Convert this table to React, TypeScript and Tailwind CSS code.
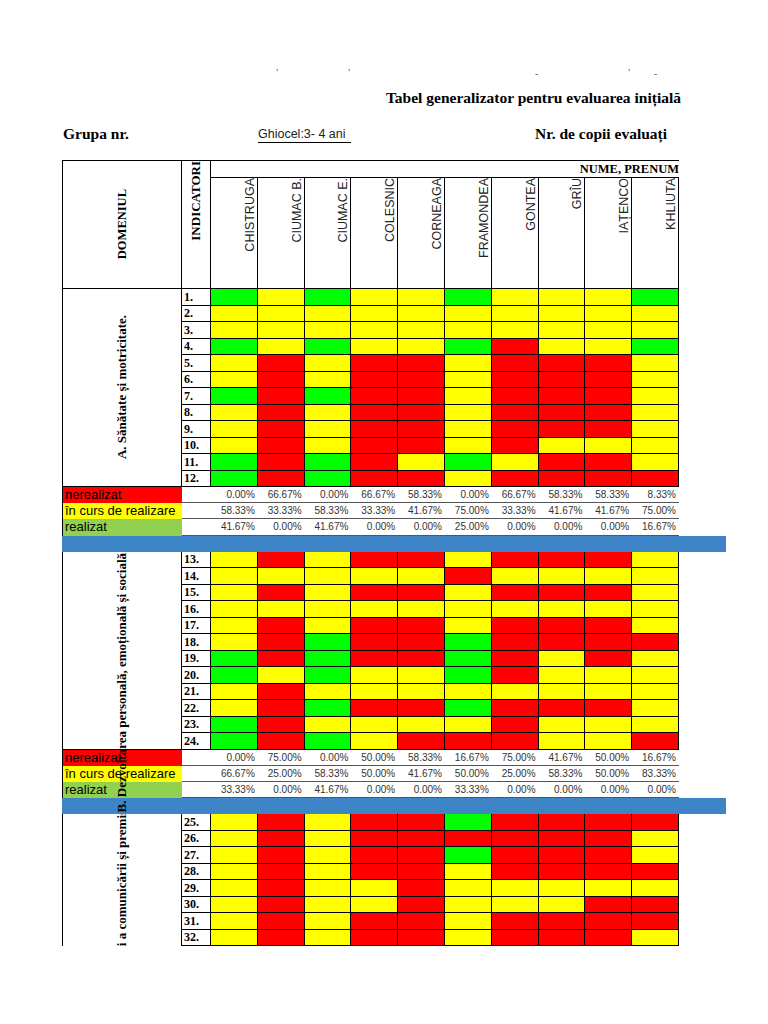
import React from 'react'

const serif = "font-['Liberation_Serif','Times_New_Roman',serif]"
const sans = "font-['Liberation_Sans',Arial,sans-serif]"
const vertical = '[writing-mode:vertical-rl] rotate-180 whitespace-nowrap'

const names = ['CHISTRUGA', 'CIUMAC B.', 'CIUMAC E.', 'COLESNIC', 'CORNEAGA', 'FRAMONDEA', 'GONTEA', 'GRÎU', 'IAȚENCO', 'KHLIUTA']

const fill: Record<string, string> = {
  G: 'bg-[#00ff00]',
  Y: 'bg-[#ffff00]',
  R: 'bg-[#ff0000]',
}

const sectionA = [
  'GYGYYGYYYG',
  'YYYYYYYYYY',
  'YYYYYYYYYY',
  'GYGYYGRYYG',
  'YRYRRYRRRY',
  'YRYRRYRRRY',
  'GRGRRYRRRY',
  'YRYRRYRRRY',
  'YRYRRYRRRY',
  'YRYRRYRYYY',
  'GRGRYGYRRY',
  'GRGRRYRRRR',
]

const sectionB = [
  'YRYRRYRRRY',
  'YYYYYRYYYY',
  'YRYRRYRRRY',
  'YYYYYYYYYY',
  'YRYRRYRRRY',
  'YRGRRGRRRR',
  'GRGRRGRYRY',
  'GYGYYGRYYY',
  'YRYYYYYYYY',
  'YRGRRGRRRY',
  'GRYYYYRYYY',
  'GRGYRRRYYR',
]

const sectionC = [
  'YRYRRGRRRR',
  'YRYRRRRRRY',
  'YRYRRGRRRY',
  'YRYRRYRRRR',
  'YRYYRYYYYY',
  'YRYYRYYYRR',
  'YRYRRYRRRR',
  'YRYRRYRRRY',
]

const stats = [
  { key: 'R', label: 'nerealizat', bg: 'bg-[#ff0000]' },
  { key: 'Y', label: 'în curs de realizare', bg: 'bg-[#ffff00]' },
  { key: 'G', label: 'realizat', bg: 'bg-[#92d050]' },
]

function percent(rows: string[], col: number, key: string) {
  const count = rows.filter((row) => row[col] === key).length
  return `${((count / rows.length) * 100).toFixed(2)}%`
}

function Rows({ rows, start }: { rows: string[]; start: number }) {
  return (
    <div className="flex flex-col">
      {rows.map((row, r) => (
        <div key={r} className="flex h-[16.5px]">
          <div className={`${serif} flex w-[29px] items-center border-r border-b border-black pl-[2px] text-[12px] font-bold leading-none`}>
            {start + r}.
          </div>
          {row.split('').map((c, i) => (
            <div key={i} className={`w-[46.8px] border-r border-b border-black ${fill[c]}`} />
          ))}
        </div>
      ))}
    </div>
  )
}

function Stats({ rows }: { rows: string[] }) {
  return (
    <div className="flex flex-col">
      {stats.map((s) => (
        <div key={s.key} className="flex h-[16.2px]">
          <div className={`${sans} w-[120px] border-l border-black ${s.bg} pl-[2px] text-[13px] leading-[16px] text-black`}>
            {s.label}
          </div>
          <div className="flex w-[497px] border-b border-[#555]">
            <div className="w-[29px]" />
            {names.map((_, i) => (
              <div key={i} className={`${sans} w-[46.8px] pr-[3px] text-right text-[10px] leading-[15px] text-[#333]`}>
                {percent(rows, i, s.key)}
              </div>
            ))}
          </div>
        </div>
      ))}
      <div className="h-[16px] w-[664px] bg-[#3d85c6]" />
    </div>
  )
}

export default function App() {
  return (
    <div className="h-[1024px] w-[768px] overflow-hidden bg-white text-black">
      <div className={`${sans} flex h-[80px] items-end pl-[276px] text-[10px] leading-[12px] text-[#666]`}>
        <span className="w-[72px]">ʼ</span>
        <span className="w-[187px]">ʼ</span>
        <span className="w-[93px]">-</span>
        <span className="w-[26px]">ʼ</span>
        <span>-</span>
      </div>

      <div className={`${serif} mt-[9px] w-[681px] text-right text-[15.5px] font-bold leading-[18px]`}>
        Tabel generalizator pentru evaluarea inițială
      </div>

      <div className="mt-[17px] flex h-[19px] items-end pl-[63px]">
        <div className={`${serif} w-[195px] text-[15.5px] font-bold leading-[18px]`}>Grupa nr.</div>
        <div className={`${sans} w-[93px] border-b border-black pb-[1px] text-[12.5px] leading-[14px] text-[#222]`}>Ghiocel:3- 4 ani</div>
        <div className={`${serif} ml-[184px] text-[15.5px] font-bold leading-[18px]`}>Nr. de copii evaluați</div>
      </div>

      <div className="ml-[62px] mt-[17px]">
        <div className="flex">
          <div className="flex h-[129px] w-[120px] items-center justify-center border border-black">
            <span className={`${serif} ${vertical} text-[12.5px] font-bold leading-[14px]`}>DOMENIUL</span>
          </div>
          <div className="flex h-[129px] w-[29px] items-start justify-center border-y border-r border-black">
            <span className={`${serif} ${vertical} text-[13px] font-bold leading-[14px]`}>INDICATORI</span>
          </div>
          <div className="flex w-[468px] flex-col">
            <div className={`${serif} h-[17px] border-t border-black text-right text-[12.5px] font-bold leading-[16px]`}>
              NUME, PRENUM
            </div>
            <div className="flex h-[112px] border-y border-black">
              {names.map((n) => (
                <div key={n} className="flex w-[46.8px] items-start justify-end border-r border-black">
                  <span className={`${sans} ${vertical} text-[12.5px] leading-[14px] text-[#222]`}>{n}</span>
                </div>
              ))}
            </div>
          </div>
        </div>

        <div className="flex">
          <div className="flex w-[120px] items-center justify-center border-x border-b border-black">
            <span className={`${serif} ${vertical} text-[13px] font-bold leading-[14px]`}>A. Sănătate și motricitate.</span>
          </div>
          <Rows rows={sectionA} start={1} />
        </div>
        <Stats rows={sectionA} />

        <div className="relative">
          <div className="flex">
            <div className="w-[120px] border-x border-b border-black" />
            <Rows rows={sectionB} start={13} />
          </div>
          <Stats rows={sectionB} />
          <div className="pointer-events-none absolute inset-y-0 left-0 flex w-[120px] items-end justify-center overflow-hidden">
            <span className={`${serif} ${vertical} mb-[2px] text-[13px] font-bold leading-[14px]`}>
              B. Dezvoltarea personală, emoțională și socială
            </span>
          </div>
        </div>

        <div className="relative overflow-hidden">
          <div className="flex">
            <div className="w-[120px] border-x border-black" />
            <Rows rows={sectionC} start={25} />
          </div>
          <div className="pointer-events-none absolute inset-y-0 left-0 flex w-[120px] items-end justify-center">
            <span className={`${serif} ${vertical} mb-[-5px] text-[13px] font-bold leading-[14px]`}>
              și a comunicării și premisele citirii și scrierii
            </span>
          </div>
        </div>
      </div>
    </div>
  )
}
